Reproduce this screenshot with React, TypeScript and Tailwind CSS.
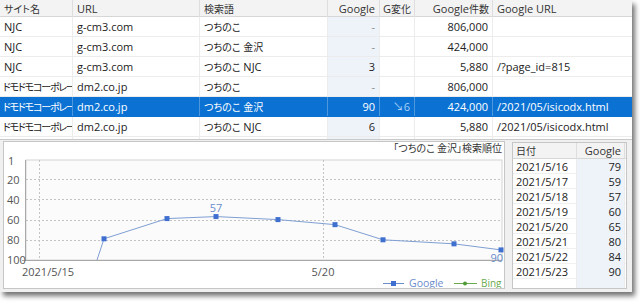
import React from 'react';

const font = "font-['Open_Sans','Noto_Sans_CJK_JP',sans-serif] [font-feature-settings:'palt']";

// Japanese runs are set a little smaller so they sit like the narrow UI font
function T({ s }: { s?: string }) {
  if (!s) return null;
  const parts = s.split(/([\u3000-\u30ff\u4e00-\u9fff\uff00-\uffef]+)/);
  return (
    <>
      {parts.map((p, i) =>
        i % 2 === 1 ? (
          <span key={i} className="text-[10px]">
            {p}
          </span>
        ) : (
          p
        )
      )}
    </>
  );
}

type Row = {
  site: string;
  url: string;
  word: string;
  rank: string;
  diff?: string;
  count: string;
  gurl?: string;
  selected?: boolean;
};

const rows: Row[] = [
  { site: 'NJC', url: 'g-cm3.com', word: 'つちのこ', rank: '-', count: '806,000' },
  { site: 'NJC', url: 'g-cm3.com', word: 'つちのこ 金沢', rank: '-', count: '424,000' },
  { site: 'NJC', url: 'g-cm3.com', word: 'つちのこ NJC', rank: '3', count: '5,880', gurl: '/?page_id=815' },
  { site: 'ドモドモコーポレー', url: 'dm2.co.jp', word: 'つちのこ', rank: '-', count: '806,000' },
  { site: 'ドモドモコーポレー', url: 'dm2.co.jp', word: 'つちのこ 金沢', rank: '90', diff: '↘6', count: '424,000', gurl: '/2021/05/isicodx.html', selected: true },
  { site: 'ドモドモコーポレー', url: 'dm2.co.jp', word: 'つちのこ NJC', rank: '6', count: '5,880', gurl: '/2021/05/isicodx.html' },
];

const history = [
  ['2021/5/16', 79],
  ['2021/5/17', 59],
  ['2021/5/18', 57],
  ['2021/5/19', 60],
  ['2021/5/20', 65],
  ['2021/5/21', 80],
  ['2021/5/22', 84],
  ['2021/5/23', 90],
] as const;

const cols = 'grid grid-cols-[73px_127px_128px_52px_35px_78px_1fr]';

function Chart() {
  // x positions measured per day, y from rank 1..100 (viewBox uses page coordinates)
  const xs = [104, 167, 216, 278, 335, 383, 454, 501];
  const y = (v: number) => 160 + ((v - 1) * 100) / 99;
  const pts = history.map(([, v], i) => `${xs[i]},${y(v)}`);
  return (
    <svg width={500} height={146} viewBox="4 142 500 146" className="block">
      <rect x={26} y={160} width={476} height={100} fill="#fbfbfc" stroke="#d4d4d4" />
      {[20, 40, 60, 80].map((v) => (
        <line key={v} x1={26} x2={502} y1={Math.round(y(v)) + 0.5} y2={Math.round(y(v)) + 0.5} stroke="#c4c4c4" strokeDasharray="2 2" />
      ))}
      {[39.5, 323.5].map((x) => (
        <line key={x} x1={x} x2={x} y1={160} y2={260} stroke="#c4c4c4" strokeDasharray="2 2" />
      ))}
      <line x1={25.5} x2={25.5} y1={160} y2={260.5} stroke="#a8a8a8" />
      <line x1={22} x2={502} y1={260.5} y2={260.5} stroke="#a8a8a8" />
      <g fill="#555" fontSize={11} fontFamily="Open Sans, sans-serif">
        <text x={8} y={165}>1</text>
        <text x={7} y={184}>20</text>
        <text x={7} y={204}>40</text>
        <text x={7} y={224}>60</text>
        <text x={7} y={244}>80</text>
        <text x={7} y={264}>100</text>
        <text x={22} y={276}>2021/5/15</text>
        <text x={323} y={276} textAnchor="middle">5/20</text>
      </g>
      <text x={502} y={152} textAnchor="end" fill="#333" fontSize={10} fontFamily="Noto Sans CJK JP, sans-serif" style={{ fontFeatureSettings: "'palt'" }}>
        「つちのこ 金沢」検索順位
      </text>
      <polyline points={`97,260 ${pts.join(' ')}`} fill="none" stroke="#7f9fd2" strokeWidth={1} />
      {xs.map((x, i) => (
        <rect key={x} x={x - 2.5} y={y(history[i][1]) - 2.5} width={5} height={5} fill="#3f6fcf" />
      ))}
      <text x={216} y={212} textAnchor="middle" fill="#6b8dcb" fontSize={11} fontFamily="Open Sans, sans-serif">57</text>
      <text x={503} y={262} textAnchor="end" fill="#6b8dcb" fontSize={11} fontFamily="Open Sans, sans-serif">90</text>
      <line x1={383} x2={404} y1={283.5} y2={283.5} stroke="#6b8dcb" />
      <rect x={391} y={281} width={5} height={5} fill="#3f6fcf" />
      <text x={409} y={287} fill="#6b8dcb" fontSize={10.5} fontFamily="Open Sans, sans-serif">Google</text>
      <line x1={454} x2={477} y1={283.5} y2={283.5} stroke="#6aaa4e" />
      <circle cx={465} cy={283.5} r={2} fill="#4e9a36" />
      <text x={481} y={287} fill="#6aaa4e" fontSize={10} fontFamily="Open Sans, sans-serif">Bing</text>
    </svg>
  );
}

export default function App() {
  return (
    <div className={`w-[640px] h-[302px] bg-white ${font} text-[11px] text-[#222]`}>
      <div className="w-[632px] h-[292px] bg-[#f0f0f0] flex flex-col shadow-[3px_4px_5px_rgba(0,0,0,0.55)]">
        {/* result table */}
        <div className="h-[140px] bg-white border-b border-[#c9c9c9] overflow-hidden">
          <div className={`${cols} h-[17px] bg-[#f3f3f3] border-b border-[#d6d6d6] text-[#333] whitespace-nowrap`}>
            <div className="px-1 leading-[17px] border-r border-[#dedede]"><T s="サイト名" /></div>
            <div className="px-1 leading-[17px] border-r border-[#dedede]">URL</div>
            <div className="px-1 leading-[17px] border-r border-[#dedede]"><T s="検索語" /></div>
            <div className="px-1 leading-[17px] border-r border-[#dedede] text-right">Google</div>
            <div className="px-[3px] leading-[17px] border-r border-[#dedede] overflow-hidden"><T s="G変化" /></div>
            <div className="px-[3px] leading-[17px] border-r border-[#dedede] text-right"><T s="Google件数" /></div>
            <div className="px-1 leading-[17px]">Google URL</div>
          </div>
          {rows.map((r, i) => {
            const cell = r.selected
              ? 'h-[19px] leading-[19px] px-1 border-r border-[#4d97dc] whitespace-nowrap overflow-hidden'
              : 'h-[19px] leading-[19px] px-1 border-r border-[#ececec] whitespace-nowrap overflow-hidden';
            const jp = r.site !== 'NJC';
            return (
              <div
                key={i}
                className={`${cols} border-b ${r.selected ? 'bg-[#0b72d4] text-white border-[#0b72d4]' : 'border-[#ececec]'}`}
              >
                <div className={`${cell} ${jp ? 'pl-[3px] pr-0 tracking-[-1.2px]' : ''}`}><T s={r.site} /></div>
                <div className={cell}>{r.url}</div>
                <div className={cell}><T s={r.word} /></div>
                <div className={`${cell} text-right ${r.selected ? '' : 'bg-[#eef3fa]'} ${r.rank === '-' ? 'text-[#888]' : ''}`}>{r.rank}</div>
                <div className={`${cell} text-right ${r.selected ? 'text-[#a9d1f7]' : 'text-[#2a63c9]'}`}>{r.diff}</div>
                <div className={`${cell} text-right`}>{r.count}</div>
                <div className="h-[19px] leading-[19px] px-1 whitespace-nowrap overflow-hidden">{r.gurl}</div>
              </div>
            );
          })}
          <div className={`${cols} h-[10px]`}>
            <div className="border-r border-[#ececec]" />
            <div className="border-r border-[#ececec]" />
            <div className="border-r border-[#ececec]" />
            <div className="border-r border-[#ececec] bg-[#eef3fa]" />
            <div className="border-r border-[#ececec]" />
            <div className="border-r border-[#ececec]" />
            <div />
          </div>
        </div>

        {/* chart + history */}
        <div className="flex gap-[7px] pl-[3px] pt-[1px] pb-[3px] flex-1 min-h-0">
          <div className="w-[502px] bg-white border border-[#c6c6c6]">
            <Chart />
          </div>
          <div className="w-[115px] mt-[1px] bg-white border border-[#c6c6c6] overflow-hidden">
            <div className="grid grid-cols-[64px_48px_1fr] h-[16px] bg-[#f3f3f3] border-b border-[#d6d6d6] text-[#333]">
              <div className="px-[3px] leading-[16px] border-r border-[#dedede]"><T s="日付" /></div>
              <div className="px-[3px] leading-[16px] border-r border-[#dedede] text-right">Google</div>
              <div />
            </div>
            {history.map(([d, v]) => (
              <div key={d} className="grid grid-cols-[64px_48px_1fr] h-[15px] border-b border-[#f0f0f0]">
                <div className="px-[3px] leading-[15px] border-r border-[#ececec]">{d}</div>
                <div className="px-[3px] leading-[15px] border-r border-[#ececec] bg-[#eef3fa] text-right">{v}</div>
                <div />
              </div>
            ))}
            <div className="grid grid-cols-[64px_48px_1fr] h-[20px]">
              <div className="border-r border-[#ececec]" />
              <div className="border-r border-[#ececec] bg-[#eef3fa]" />
              <div />
            </div>
          </div>
        </div>
      </div>
    </div>
  );
}
